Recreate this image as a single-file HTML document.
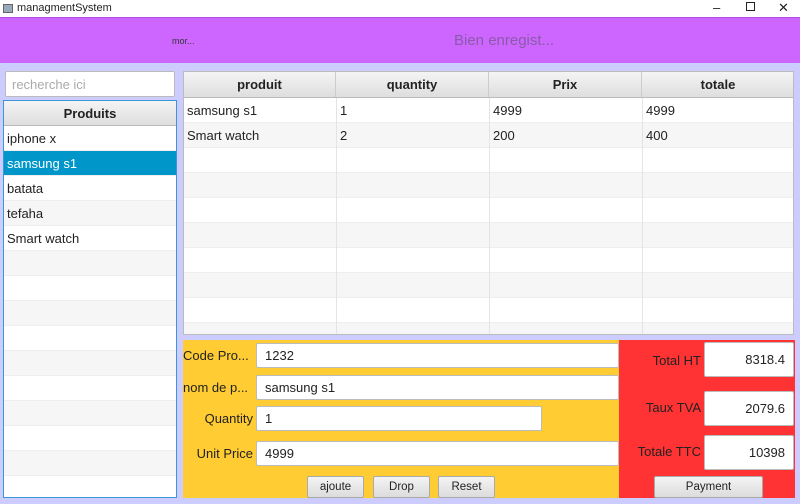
<!DOCTYPE html>
<html><head><style>
*{box-sizing:border-box;margin:0;padding:0}
body{width:800px;height:504px;background:#ccccff;font-family:"Liberation Sans",sans-serif;font-size:12px;color:#222;position:relative;overflow:hidden}
.a{position:absolute}
.inp{position:absolute;background:#fff;border:1px solid #bbb;border-radius:2px;padding-left:8px;display:flex;align-items:center;font-size:13px}
.btn{position:absolute;background:linear-gradient(#f4f4f4,#dcdcdc);border:1px solid #aaa;border-radius:2px;display:flex;align-items:center;justify-content:center;font-size:11.5px}
.row{position:absolute;left:0;right:0;height:25px;border-bottom:1px solid #eee;display:flex;align-items:center;padding-left:3px;font-size:13px}
.lbl{position:absolute;text-align:right;font-size:13px}
</style></head><body>
<div class="a" style="left:0;top:0;width:800px;height:17px;background:#fff;font-size:11px">
 <div class="a" style="left:3px;top:4px;width:10px;height:9px;border:1px solid #666;background:#9ab"></div>
 <div class="a" style="left:17px;top:2px">managmentSystem</div>
 <div class="a" style="left:713px;top:0;font-size:13px">–</div>
 <div class="a" style="left:746px;top:2px;width:9px;height:9px;border:1px solid #222"></div>
 <div class="a" style="left:778px;top:0;font-size:13px">✕</div>
</div>
<div class="a" style="left:0;top:17px;width:800px;height:46px;background:#cc66ff;border-top:1px solid #b050e0">
 <div class="a" style="left:172px;top:18px;font-size:9px;color:#333">mor...</div>
 <div class="a" style="left:454px;top:14px;font-size:15px;color:#8a5aa8">Bien enregist...</div>
</div>
<div class="inp" style="left:5px;top:71px;width:170px;height:26px;color:#aaa;padding-left:6px">recherche ici</div>
<div class="a" style="left:3px;top:100px;width:174px;height:398px;background:#fff;border:1px solid #3a96dd;overflow:hidden">
 <div class="a" style="left:0;top:0;width:172px;height:25px;background:linear-gradient(#f4f4f4,#dedede);border-bottom:1px solid #bbb;font-weight:bold;text-align:center;line-height:25px;font-size:13px">Produits</div>
 <div class="a" style="left:0;top:25px;width:172px;height:400px">
  <div class="row" style="top:0">iphone x</div>
  <div class="row" style="top:25px;background:#0096c9;color:#fff">samsung s1</div>
  <div class="row" style="top:50px">batata</div>
  <div class="row" style="top:75px;background:#f6f6f6">tefaha</div>
  <div class="row" style="top:100px">Smart watch</div>
  <div class="row" style="top:125px;background:#f6f6f6"></div><div class="row" style="top:150px"></div><div class="row" style="top:175px;background:#f6f6f6"></div><div class="row" style="top:200px"></div><div class="row" style="top:225px;background:#f6f6f6"></div><div class="row" style="top:250px"></div><div class="row" style="top:275px;background:#f6f6f6"></div><div class="row" style="top:300px"></div><div class="row" style="top:325px;background:#f6f6f6"></div><div class="row" style="top:350px"></div>
 </div>
</div>
<div class="a" style="left:183px;top:71px;width:611px;height:264px;background:#fff;border:1px solid #bbb;overflow:hidden">
 <div class="a" style="left:0;top:0;width:611px;height:26px;background:linear-gradient(#f4f4f4,#dedede);border-bottom:1px solid #bbb;font-weight:bold;font-size:13px;display:flex">
  <div style="width:152px;text-align:center;line-height:26px;border-right:1px solid #ccc">produit</div>
  <div style="width:153px;text-align:center;line-height:26px;border-right:1px solid #ccc">quantity</div>
  <div style="width:153px;text-align:center;line-height:26px;border-right:1px solid #ccc">Prix</div>
  <div style="width:152px;text-align:center;line-height:26px">totale</div>
 </div>
 <div class="a" style="left:0;top:26px;width:611px;height:240px">
  <div class="row" style="top:0"><span style="width:153px">samsung s1</span><span style="width:153px">1</span><span style="width:153px">4999</span><span>4999</span></div>
  <div class="row" style="top:25px;background:#f6f6f6"><span style="width:153px">Smart watch</span><span style="width:153px">2</span><span style="width:153px">200</span><span>400</span></div>
  <div class="row" style="top:50px"></div><div class="row" style="top:75px;background:#f6f6f6"></div><div class="row" style="top:100px"></div><div class="row" style="top:125px;background:#f6f6f6"></div><div class="row" style="top:150px"></div><div class="row" style="top:175px;background:#f6f6f6"></div><div class="row" style="top:200px"></div><div class="row" style="top:225px;background:#f6f6f6"></div>
 </div>
 <div class="a" style="left:152px;top:26px;width:1px;height:240px;background:#e4e4e4"></div>
 <div class="a" style="left:305px;top:26px;width:1px;height:240px;background:#e4e4e4"></div>
 <div class="a" style="left:458px;top:26px;width:1px;height:240px;background:#e4e4e4"></div>
</div>
<div class="a" style="left:183px;top:340px;width:437px;height:158px;background:#ffcc33"></div>
<div class="a" style="left:619px;top:340px;width:176px;height:158px;background:#ff3333"></div>
<div class="lbl" style="left:183px;top:348px;width:70px;text-align:left">Code Pro...</div>
<div class="inp" style="left:256px;top:343px;width:363px;height:25px">1232</div>
<div class="lbl" style="left:183px;top:380px;width:70px;text-align:left">nom de p...</div>
<div class="inp" style="left:256px;top:375px;width:363px;height:25px">samsung s1</div>
<div class="lbl" style="left:183px;top:411px;width:70px">Quantity</div>
<div class="inp" style="left:256px;top:406px;width:286px;height:25px">1</div>
<div class="lbl" style="left:183px;top:446px;width:70px">Unit Price</div>
<div class="inp" style="left:256px;top:441px;width:363px;height:25px">4999</div>
<div class="btn" style="left:307px;top:476px;width:57px;height:22px">ajoute</div>
<div class="btn" style="left:373px;top:476px;width:57px;height:22px">Drop</div>
<div class="btn" style="left:438px;top:476px;width:57px;height:22px">Reset</div>
<div class="lbl" style="left:620px;top:353px;width:81px">Total HT</div>
<div class="inp" style="left:704px;top:342px;width:90px;height:35px;justify-content:flex-end;padding-right:8px">8318.4</div>
<div class="lbl" style="left:620px;top:400px;width:81px">Taux TVA</div>
<div class="inp" style="left:704px;top:391px;width:90px;height:35px;justify-content:flex-end;padding-right:8px">2079.6</div>
<div class="lbl" style="left:620px;top:444px;width:81px">Totale TTC</div>
<div class="inp" style="left:704px;top:435px;width:90px;height:35px;justify-content:flex-end;padding-right:8px">10398</div>
<div class="btn" style="left:654px;top:476px;width:109px;height:22px">Payment</div>
</body></html>
